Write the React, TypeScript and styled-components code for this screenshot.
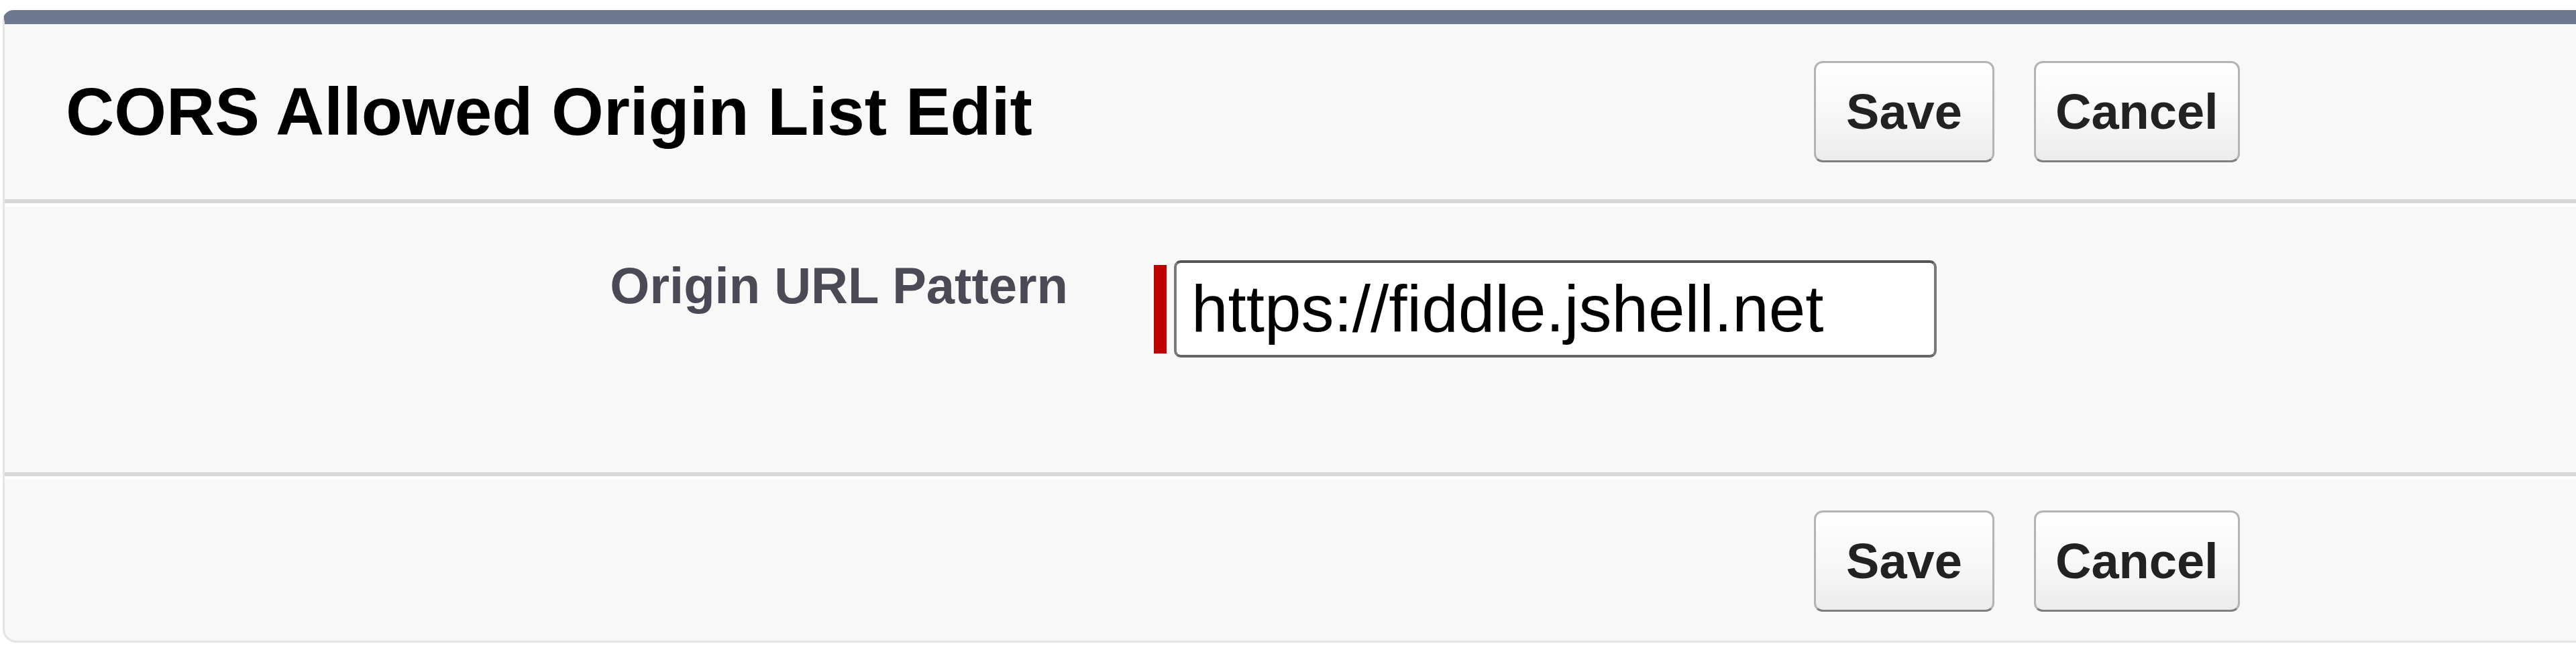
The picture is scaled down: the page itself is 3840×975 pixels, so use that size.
import React from "react";
import styled, { createGlobalStyle } from "styled-components";

const Global = createGlobalStyle`
  html, body {
    margin: 0;
    padding: 0;
    background: #ffffff;
    overflow: hidden;
  }
  body {
    font-family: "Liberation Sans", Arial, Helvetica, sans-serif;
  }
`;

const Page = styled.div`
  padding: 15px 0 0 4px;
  overflow: hidden;
  height: 975px;
  box-sizing: border-box;
`;

const Panel = styled.section`
  margin-right: -60px;
  background: #f8f8f8;
  border-top: 21px solid #6e7891;
  border-left: 3px solid #e4e4e4;
  border-bottom: 3px solid #e4e4e4;
  border-radius: 16px 0 0 20px;
`;

const Bar = styled.div<{ $edge: "top" | "bottom" }>`
  display: grid;
  grid-template-columns: 2697px 1fr;
  align-items: center;
  box-sizing: border-box;
  ${(p) =>
    p.$edge === "top"
      ? "border-bottom: 6px solid #d8d8d8; height: 267px;"
      : "border-top: 5px solid #ffffff; height: 245px; padding-top: 2px;"}
`;

const Title = styled.h2`
  margin: 0;
  padding-left: 91px;
  font-family: "Liberation Sans", Arial, sans-serif;
  font-weight: 700;
  font-size: 100px;
  line-height: 115px;
  color: #000000;
  white-space: nowrap;
`;

const Buttons = styled.div`
  display: flex;
  gap: 59px;
  align-items: center;
`;

const Button = styled.button`
  min-width: 269px;
  box-sizing: border-box;
  font-family: "Liberation Sans", Arial, sans-serif;
  font-weight: 700;
  font-size: 74px;
  line-height: 85px;
  color: #222222;
  white-space: nowrap;
  padding: 30px 29px;
  margin: 0;
  border: 3px solid #b4b4b4;
  border-bottom-color: #7f7f7f;
  border-radius: 13px;
  background: linear-gradient(#ffffff 0%, #f7f7f7 55%, #ececec 100%);
  cursor: pointer;
`;

const Body = styled.div`
  border-top: 5px solid #ffffff;
  border-bottom: 6px solid #d8d8d8;
  padding: 80px 0 171px;
`;

const FieldRow = styled.div`
  display: grid;
  grid-template-columns: 1585px 1fr;
  align-items: start;
`;

const Label = styled.label`
  text-align: right;
  font-family: "Liberation Sans", Arial, sans-serif;
  font-weight: 700;
  font-size: 76px;
  line-height: 76px;
  color: #4a4a56;
  white-space: nowrap;
`;

const DataCell = styled.div`
  display: flex;
  align-items: center;
  gap: 11px;
  padding-left: 128px;
`;

const Required = styled.span`
  display: block;
  width: 19px;
  height: 132px;
  background: #c00000;
`;

const Input = styled.input`
  box-sizing: border-box;
  width: 1137px;
  height: 145px;
  margin: 0;
  padding: 0 22px;
  font-family: "Liberation Sans", Arial, sans-serif;
  font-size: 98px;
  color: #000000;
  background: #ffffff;
  border: 4px solid #7a7a7a;
  border-top-color: #555555;
  border-bottom-color: #666666;
  border-radius: 10px;
  outline: none;
`;

const Spacer = styled.div``;

export default function App() {
  return (
    <Page>
      <Global />
      <Panel>
        <Bar $edge="top">
          <Title>CORS Allowed Origin List Edit</Title>
          <Buttons>
            <Button>Save</Button>
            <Button>Cancel</Button>
          </Buttons>
        </Bar>
        <Body>
          <FieldRow>
            <Label htmlFor="origin">Origin URL Pattern</Label>
            <DataCell>
              <Required />
              <Input id="origin" defaultValue="https://fiddle.jshell.net" />
            </DataCell>
          </FieldRow>
        </Body>
        <Bar $edge="bottom">
          <Spacer />
          <Buttons>
            <Button>Save</Button>
            <Button>Cancel</Button>
          </Buttons>
        </Bar>
      </Panel>
    </Page>
  );
}
